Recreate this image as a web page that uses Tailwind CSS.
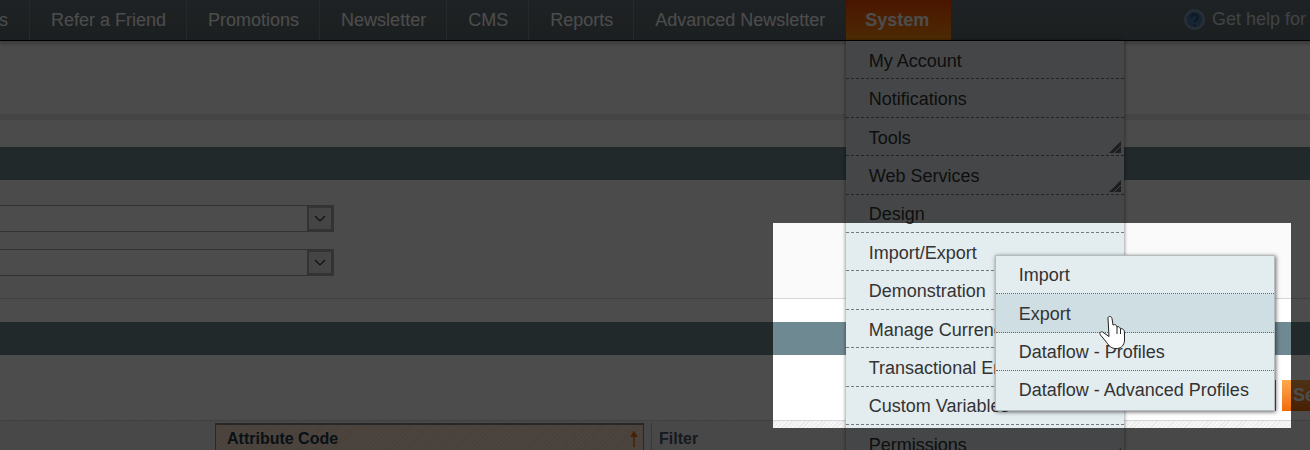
<!DOCTYPE html>
<html lang="en">
<head>
  <meta charset="UTF-8">
  <title>System - Import/Export</title>
  <script src="https://cdn.jsdelivr.net/npm/@tailwindcss/browser@4"></script>
</head>
<body class="relative w-[1310px] h-[450px] overflow-hidden bg-[#fafafa] font-['Liberation_Sans',Arial,sans-serif] text-[18px] text-[#2f2f2f]">

  <!-- top nav -->
  <nav class="relative z-10 flex h-[41px] border-b border-black bg-gradient-to-b from-[#687378] to-[#5c696e] text-white shadow-[0_3px_3px_rgba(0,0,0,0.2)]">
    <div class="flex w-[30px] justify-end overflow-hidden border-r border-[#7d8a8f] pr-[21px] leading-[40px]">Customers</div>
    <div class="border-r border-[#7d8a8f] pl-[21px] pr-[20px] leading-[40px]">Refer a Friend</div>
    <div class="border-r border-[#7d8a8f] pl-[21px] pr-[20px] leading-[40px]">Promotions</div>
    <div class="border-r border-[#7d8a8f] pl-[21px] pr-[20px] leading-[40px]">Newsletter</div>
    <div class="border-r border-[#7d8a8f] pl-[21px] pr-[20px] leading-[40px]">CMS</div>
    <div class="border-r border-[#7d8a8f] pl-[21px] pr-[20px] leading-[40px]">Reports</div>
    <div class="pl-[21px] pr-[21px] leading-[40px]">Advanced Newsletter</div>

    <!-- System dropdown -->
    <div class="relative h-10 w-[105px] bg-gradient-to-b from-[#f74600] to-[#ff8c10] pl-[19px] font-bold leading-[40px]">
      System
      <ul class="absolute left-0 top-[41px] w-[278px] bg-[#e3ecef] font-normal text-[#333] shadow-[0_0_3px_1px_rgba(0,0,0,0.35)]">
        <li class="h-[38.4px] border-b border-dashed border-[#777] pl-[22.5px] leading-[40px]">My Account</li>
        <li class="h-[38.4px] border-b border-dashed border-[#777] pl-[22.5px] leading-[40px]">Notifications</li>
        <li class="relative h-[38.4px] border-b border-dashed border-[#777] pl-[22.5px] leading-[40px]">Tools
          <svg class="absolute bottom-[2px] right-[3px] h-[12px] w-[12px]" viewBox="0 0 12 12"><path d="M0 12L12 0V12Z" fill="#666"/><path d="M5 12L12 5" stroke="#e3ecef"/></svg>
        </li>
        <li class="relative h-[38.4px] border-b border-dashed border-[#777] pl-[22.5px] leading-[40px]">Web Services
          <svg class="absolute bottom-[2px] right-[3px] h-[12px] w-[12px]" viewBox="0 0 12 12"><path d="M0 12L12 0V12Z" fill="#666"/><path d="M5 12L12 5" stroke="#e3ecef"/></svg>
        </li>
        <li class="h-[38.4px] border-b border-dashed border-[#777] pl-[22.5px] leading-[38px]">Design</li>
        <li class="relative h-[38.4px] border-b border-dashed border-[#777] pl-[22.5px] leading-[40px]">Import/Export
          <!-- submenu -->
          <ul class="absolute left-[149px] top-[22px] z-10 w-[280px] border border-[#b4bcbf] bg-[#e3ecef] shadow-[1px_1px_4px_rgba(0,0,0,0.6)]">
            <li class="h-[38.4px] border-b border-dotted border-[#666] pl-[22.5px] leading-[38px]">Import</li>
            <li class="h-[38.4px] border-b border-dotted border-[#666] bg-[#cfdee2] pl-[22.5px] leading-[40px]">Export</li>
            <li class="h-[38.4px] border-b border-dotted border-[#666] pl-[22.5px] leading-[38px]">Dataflow - Profiles</li>
            <li class="h-[38.4px] pl-[22.5px] leading-[38px]">Dataflow - Advanced Profiles</li>
          </ul>
        </li>
        <li class="h-[38.4px] border-b border-dashed border-[#777] pl-[22.5px] leading-[40px]">Demonstration</li>
        <li class="h-[38.4px] border-b border-dashed border-[#777] pl-[22.5px] leading-[40px]">Manage Currency</li>
        <li class="h-[38.4px] border-b border-dashed border-[#777] pl-[22.5px] leading-[40px]">Transactional Emails</li>
        <li class="h-[38.4px] border-b border-dashed border-[#777] pl-[22.5px] leading-[38px]">Custom Variables</li>
        <li class="relative h-[38.4px] border-b border-dashed border-[#777] pl-[22.5px] leading-[40px]">Permissions
          <svg class="absolute bottom-[2px] right-[3px] h-[12px] w-[12px]" viewBox="0 0 12 12"><path d="M0 12L12 0V12Z" fill="#666"/><path d="M5 12L12 5" stroke="#e3ecef"/></svg>
        </li>
      </ul>
    </div>

    <div class="ml-auto flex w-[126px] items-center gap-[7px] overflow-hidden whitespace-nowrap pb-[1px] text-[#d8dfe2]">
      <svg class="h-[21px] w-[21px] shrink-0" viewBox="0 0 20 20"><circle cx="10" cy="10" r="10" fill="#7f9dbd"/><circle cx="10" cy="10" r="7.5" fill="#4f79a6"/><path d="M7 8a3 3 0 1 1 4.5 2.6c-1 .6-1.5 1-1.5 2" fill="none" stroke="#2f527a" stroke-width="2"/><circle cx="10" cy="15.5" r="1.2" fill="#2f527a"/></svg>
      <span>Get help for this page</span>
    </div>
  </nav>

  <!-- page header -->
  <div class="h-[73px]"></div>
  <div class="h-[6px] bg-[#e6e6e6]"></div>
  <div class="h-[27px]"></div>

  <!-- export settings -->
  <div class="h-[33px] bg-[#6f8992]"></div>
  <div class="flex h-[119px] flex-col gap-[17px] border-b border-[#d6d6d6] pt-[25px]">
    <div class="-ml-[2px] flex h-[27px] w-[336px] justify-end border border-[#aaa] bg-white">
      <div class="flex w-[26px] items-center justify-center border-2 border-[#aaa] bg-[#e8e8e8]">
        <svg class="h-[8px] w-[12px]" viewBox="0 0 12 8"><path d="M1 1l5 5 5-5" fill="none" stroke="#333" stroke-width="1.2"/></svg>
      </div>
    </div>
    <div class="-ml-[2px] flex h-[27px] w-[336px] justify-end border border-[#aaa] bg-white">
      <div class="flex w-[26px] items-center justify-center border-2 border-[#aaa] bg-[#e8e8e8]">
        <svg class="h-[8px] w-[12px]" viewBox="0 0 12 8"><path d="M1 1l5 5 5-5" fill="none" stroke="#333" stroke-width="1.2"/></svg>
      </div>
    </div>
  </div>
  <div class="h-[23px] bg-white"></div>

  <!-- entity attributes -->
  <div class="h-[33px] bg-[#6f8992]"></div>
  <div class="flex h-[65px] items-end justify-end gap-[6px] bg-white pb-[9px] font-bold text-white">
    <div class="h-[31px] w-[122px] border-b-2 border-r border-[#8a4a1f] bg-[#fdf3e8]"></div>
    <div class="h-[31px] w-[28px] bg-gradient-to-b from-[#ffa84a] to-[#ee6c00] pl-[11px] leading-[30px]">Search</div>
  </div>

  <!-- table head -->
  <div class="flex h-[32px] border-t border-[#d0d6d9] bg-[repeating-linear-gradient(135deg,#f6f6f6_0,#f6f6f6_2px,#e9e9e9_2px,#e9e9e9_3px)] pt-[2px] text-[16px] font-bold">
    <div class="ml-[215px] flex h-[32px] w-[429px] items-center justify-between border-t-2 border-x border-[#888] bg-[repeating-linear-gradient(135deg,#fde8d3_0,#fde8d3_2px,#f1d8c0_2px,#f1d8c0_3px)] pb-[3px] pl-[11px] pr-[5px] text-[#1c3a4a]">
      Attribute Code
      <svg class="h-[16px] w-[8px]" viewBox="0 0 8 16"><path d="M4 16V2M1 6l3-5 3 5" fill="#ee6c00" stroke="#ee6c00" stroke-width="1.4"/></svg>
    </div>
    <div class="ml-[7px] flex h-[32px] items-center border-l border-[#bbb] pb-[1px] pl-[7px] text-[#46586a]">Filter</div>
  </div>

  <!-- hand cursor -->
  <svg class="absolute left-[1099px] top-[315px] z-20 h-[34px] w-[27px]" viewBox="9 14 26 34">
    <path d="M17.5 17C17.5 14.8 21 14.8 21.5 17.5L22.5 24C25 23 26 24 26.5 26C28 25 29.5 26 30 28C32 27 33.5 28.5 34 31V40C33.5 44 31 47 27 47.5H24C20 47 18 44 15 40L10 34C8.5 32 10 30 12 31L18.5 35.5Z" fill="#fff" stroke="#222"/>
    <path d="M26.5 26V33M30 28V33" stroke="#222" fill="none"/>
  </svg>

  <!-- dim layer around the highlighted region -->
  <div class="absolute left-[773px] top-[223px] z-30 h-[205px] w-[518px] shadow-[0_0_0_2000px_rgba(0,0,0,0.7)]"></div>
</body>
</html>
